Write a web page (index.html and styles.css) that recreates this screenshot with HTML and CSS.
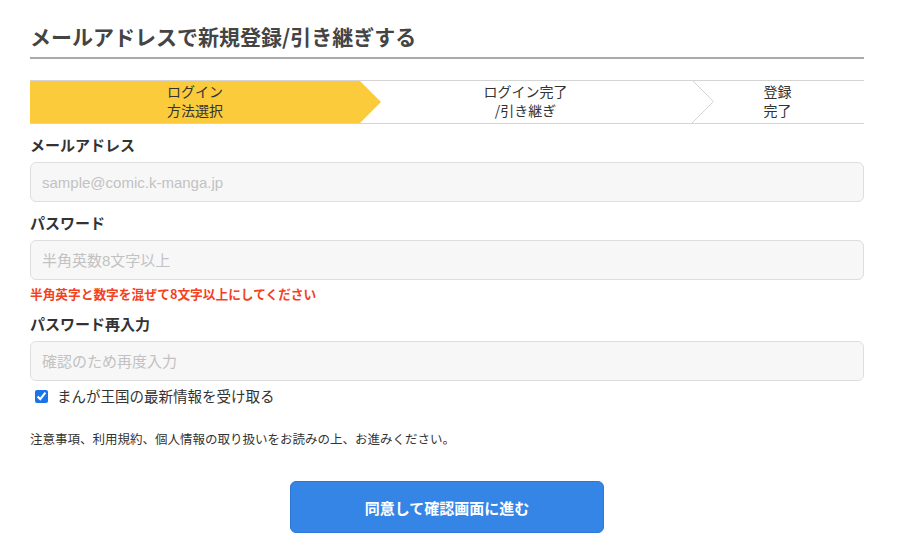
FILE: index.html
```html
<!DOCTYPE html>
<html lang="ja">
<head>
    <meta charset="UTF-8">
    <meta name="viewport" content="width=device-width, initial-scale=1.0">
    <title>メールアドレスで新規登録/引き継ぎする</title>
    <link rel="stylesheet" href="styles.css">
</head>
<body>
    <div class="container">
        <h1 class="page-title">メールアドレスで新規登録/引き継ぎする</h1>

        <ol class="steps">
            <li class="step step-current"><span>ログイン</span><span>方法選択</span></li>
            <li class="step step-middle"><span>ログイン完了</span><span>/引き継ぎ</span></li>
            <li class="step step-last">
                <svg class="chevron" width="24" height="43" viewBox="0 0 24 43">
                    <polyline points="1,0 22.5,21.5 1,43" fill="none" stroke="#d4d4d4" stroke-width="1"/>
                </svg>
                <span>登録</span><span>完了</span>
            </li>
        </ol>

        <form id="registerForm">
            <div class="form-group">
                <label class="field-label" for="email">メールアドレス</label>
                <input class="field-input" type="email" id="email" name="email" placeholder="sample@comic.k-manga.jp">
            </div>
            <div class="form-group">
                <label class="field-label" for="password">パスワード</label>
                <input class="field-input" type="password" id="password" name="password" placeholder="半角英数8文字以上">
                <p class="field-error">半角英字と数字を混ぜて8文字以上にしてください</p>
            </div>
            <div class="form-group">
                <label class="field-label" for="password_confirm">パスワード再入力</label>
                <input class="field-input" type="password" id="password_confirm" name="password_confirm" placeholder="確認のため再度入力">
            </div>
            <label class="check-row">
                <input type="checkbox" id="newsletter" name="newsletter" checked>
                まんが王国の最新情報を受け取る
            </label>
            <p class="notice">注意事項、利用規約、個人情報の取り扱いをお読みの上、お進みください。</p>
            <div class="actions">
                <button type="submit" class="submit-btn">同意して確認画面に進む</button>
            </div>
        </form>
    </div>
</body>
</html>
```

FILE: styles.css
```css
body {
    font-family: "Noto Sans CJK JP", "Noto Sans", sans-serif;
    margin: 0;
    padding: 0;
    background-color: #fff;
    color: #333;
}
.container {
    width: 834px;
    padding: 0 30px;
}
.page-title {
    margin: 0;
    padding: 22px 0 7px;
    font-size: 21px;
    line-height: 28px;
    font-weight: bold;
    color: #444;
    border-bottom: 2px solid #aaa;
}

/* stepper */
.steps {
    display: flex;
    list-style: none;
    margin: 21px 0 0;
    padding: 0;
    height: 42px;
    border-top: 1px solid #d4d4d4;
    border-bottom: 1px solid #d4d4d4;
}
.step {
    position: relative;
    display: flex;
    flex-direction: column;
    align-items: center;
    justify-content: center;
    padding-bottom: 2px;
    text-align: center;
    font-size: 14px;
    line-height: 19px;
    color: #333;
}
.step span {
    display: block;
    height: 19px;
}
.step-current {
    width: 330px;
    background-color: #fccb3b;
}
.step-current::after {
    content: "";
    position: absolute;
    top: 0;
    right: -21px;
    border-top: 21px solid transparent;
    border-bottom: 21px solid transparent;
    border-left: 21px solid #fccb3b;
}
.step-middle {
    width: 331px;
}
.step-last {
    flex: 1;
}
.chevron {
    position: absolute;
    left: 0;
    top: -1px;
}

/* form */
.form-group {
    display: flex;
    flex-direction: column;
}
.field-label {
    display: block;
    margin: 11px 0 7px;
    font-size: 15px;
    line-height: 20px;
    font-weight: bold;
    color: #333;
}
.field-input {
    box-sizing: border-box;
    width: 100%;
    height: 40px;
    padding: 0 11px;
    font-family: "Liberation Sans", "Noto Sans CJK JP", sans-serif;
    font-size: 15px;
    color: #333;
    background-color: #f7f7f7;
    border: 1px solid #dedede;
    border-radius: 6px;
    outline: none;
}
.field-input::placeholder {
    color: #c2c2c2;
}
.field-error {
    margin: 5px 0 0;
    font-size: 12.7px;
    line-height: 18px;
    font-weight: bold;
    color: #f5411d;
}
.check-row {
    display: flex;
    align-items: center;
    margin-top: 4px;
    font-size: 14.5px;
    line-height: 22px;
    color: #333;
}
.check-row input {
    width: 13px;
    height: 13px;
    margin: 0 9px 0 5px;
    accent-color: #1a73e8;
}
.notice {
    margin: 23px 0 0;
    font-size: 12.5px;
    line-height: 18px;
    color: #333;
}
.actions {
    display: flex;
    justify-content: center;
    margin-top: 33px;
}
.submit-btn {
    width: 314px;
    height: 52px;
    font-family: inherit;
    font-size: 15px;
    font-weight: bold;
    color: #fff;
    background-color: #3585e7;
    border: 1px solid #2f77d6;
    border-radius: 6px;
    cursor: pointer;
}
```
